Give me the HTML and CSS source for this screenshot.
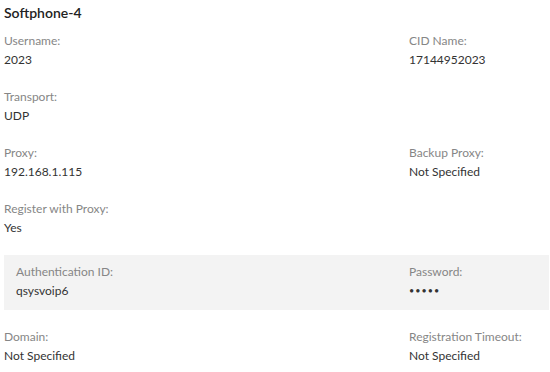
FILE: index.html
```html
<!DOCTYPE html>
<html lang="en">
<head>
	<meta charset="UTF-8">
	<title>Softphone-4</title>
	<link rel="stylesheet" href="styles.css">
</head>
<body>
	<div class="panel">
		<h2 class="title">Softphone-4</h2>

		<div class="row">
			<div class="field">
				<div class="label">Username:</div>
				<div class="value">2023</div>
			</div>
			<div class="field">
				<div class="label">CID Name:</div>
				<div class="value">17144952023</div>
			</div>
		</div>

		<div class="row">
			<div class="field">
				<div class="label">Transport:</div>
				<div class="value">UDP</div>
			</div>
		</div>

		<div class="row">
			<div class="field">
				<div class="label">Proxy:</div>
				<div class="value">192.168.1.115</div>
			</div>
			<div class="field">
				<div class="label">Backup Proxy:</div>
				<div class="value">Not Specified</div>
			</div>
		</div>

		<div class="row">
			<div class="field">
				<div class="label">Register with Proxy:</div>
				<div class="value">Yes</div>
			</div>
		</div>

		<div class="row shaded">
			<div class="field">
				<div class="label">Authentication ID:</div>
				<div class="value">qsysvoip6</div>
			</div>
			<div class="field">
				<div class="label">Password:</div>
				<div class="value dots">&bull;&bull;&bull;&bull;&bull;</div>
			</div>
		</div>

		<div class="row">
			<div class="field">
				<div class="label">Domain:</div>
				<div class="value">Not Specified</div>
			</div>
			<div class="field">
				<div class="label">Registration Timeout:</div>
				<div class="value">Not Specified</div>
			</div>
		</div>
	</div>
</body>
</html>
```

FILE: styles.css
```css
body {
	margin:0;
	font-family: Lato, "Noto Sans", sans-serif;
	font-size:12px;
	color:#333;
	background:#fff;
}

.panel {
	width:545px;
	padding:3px 0 0 4px;
}

.title {
	margin:0 0 8px;
	font-size:14px;
	font-weight:600;
	line-height:20px;
	color:#222;
}

.row {
	display:grid;
	grid-template-columns:405px 1fr;
	margin-bottom:18px;
}

.shaded {
	grid-template-columns:393px 1fr;
	background:#f3f3f3;
	padding:7px 0 10px 12px;
	margin-bottom:17px;
}

.label {
	line-height:19px;
	color:#868686;
}

.value {
	line-height:19px;
	color:#333;
}

.dots {
	font-size:9px;
	letter-spacing:1px;
}
```
